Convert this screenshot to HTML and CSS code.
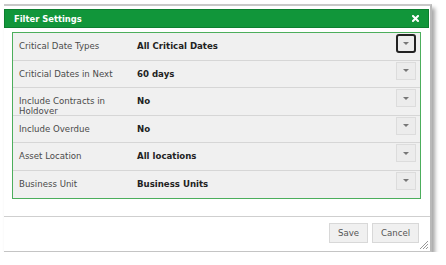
FILE: index.html
```html
<!DOCTYPE html>
<html>
<head>
<meta charset="utf-8">
<link rel="stylesheet" href="styles.css">
</head>
<body>
<div class="dialog">
  <div class="header">
    <span class="title">Filter Settings</span>
    <svg class="close" width="7" height="7" viewBox="0 0 7 7"><path d="M1 1L6 6M6 1L1 6" stroke="#fff" stroke-width="2" stroke-linecap="square"/></svg>
  </div>
  <div class="content">
    <div class="panel">
      <div class="row">
        <div class="label">Critical Date Types</div>
        <div class="value">All Critical Dates</div>
        <div class="dd focus"><span class="tri"></span></div>
      </div>
      <div class="row">
        <div class="label">Criticial Dates in Next</div>
        <div class="value">60 days</div>
        <div class="dd"><span class="tri"></span></div>
      </div>
      <div class="row">
        <div class="label">Include Contracts in Holdover</div>
        <div class="value">No</div>
        <div class="dd"><span class="tri"></span></div>
      </div>
      <div class="row">
        <div class="label">Include Overdue</div>
        <div class="value">No</div>
        <div class="dd"><span class="tri"></span></div>
      </div>
      <div class="row">
        <div class="label">Asset Location</div>
        <div class="value">All locations</div>
        <div class="dd"><span class="tri"></span></div>
      </div>
      <div class="row last">
        <div class="label">Business Unit</div>
        <div class="value">Business Units</div>
        <div class="dd"><span class="tri"></span></div>
      </div>
    </div>
  </div>
  <div class="footer">
    <button class="btn save">Save</button>
    <button class="btn cancel">Cancel</button>
    <span class="grip"></span>
  </div>
</div>
</body>
</html>
```

FILE: styles.css
```css
html, body {
  margin: 0;
  padding: 0;
  background: #fff;
}
body {
  font-family: "DejaVu Sans", Verdana, sans-serif;
  padding: 4px 0 0 4px;
}
.dialog {
  width: 426px;
  height: 245px;
  background: #fff;
  border-top: 2px solid #c8c8c8;
  border-right: 2px solid #b9b9b9;
  border-bottom: 1px solid #c4c4c4;
  box-shadow: 3px 4px 4px rgba(0, 0, 0, 0.35);
  display: flex;
  flex-direction: column;
  position: relative;
}
.header {
  margin-top: 3px;
  margin-right: 1px;
  height: 19px;
  background: #11963a;
  border: 1px solid #0c7f2f;
  box-sizing: border-box;
  display: flex;
  align-items: center;
  justify-content: space-between;
  padding: 0 9px 0 9px;
}
.title {
  color: #fff;
  font-weight: bold;
  font-size: 8.4px;
}
.close {
  display: block;
}
.content {
  padding: 4px 9px 0 8px;
}
.panel {
  border: 1px solid #4cae5c;
  background: #f0f0f0;
}
.row {
  height: 26.5px;
  border-bottom: 1px solid #d6d6d6;
  display: flex;
  align-items: flex-start;
  box-sizing: content-box;
  font-size: 8.6px;
  line-height: 10px;
}
.row.last {
  border-bottom: none;
  height: 27.5px;
}
.label {
  width: 118px;
  padding: 8px 0 0 6px;
  color: #4a4a4a;
  flex: none;
}
.value {
  flex: 1;
  padding-top: 8px;
  font-weight: bold;
  color: #222;
}
.dd {
  width: 20px;
  height: 18px;
  margin: 1px 4px 0 0;
  box-sizing: border-box;
  background: #ececec;
  border: 1px solid #dcdcdc;
  display: flex;
  align-items: center;
  justify-content: center;
}
.dd.focus {
  border: 2px solid #222;
  border-radius: 3px;
  height: 19px;
  margin-top: 1px;
}
.tri {
  width: 0;
  height: 0;
  border-left: 3px solid transparent;
  border-right: 3px solid transparent;
  border-top: 3px solid #777;
}
.footer {
  margin-top: 17px;
  border-top: 1px solid #cfcfcf;
  flex: 1;
  display: flex;
  justify-content: flex-end;
  align-items: flex-start;
  padding: 6px 11px 0 0;
  gap: 4px;
}
.btn {
  font-family: "DejaVu Sans", Verdana, sans-serif;
  font-size: 8.6px;
  color: #555;
  background: #f0f0f0;
  border: 1px solid #d8d8d8;
  height: 20px;
  padding: 0;
  margin: 0;
}
.save { width: 39px; }
.cancel { width: 47px; }
.grip {
  position: absolute;
  right: 2px;
  bottom: 2px;
  width: 8px;
  height: 8px;
  background: linear-gradient(135deg, transparent 0 45%, #999 45% 52%, transparent 52% 65%, #999 65% 72%, transparent 72% 85%, #999 85% 92%, transparent 92%);
}
```
